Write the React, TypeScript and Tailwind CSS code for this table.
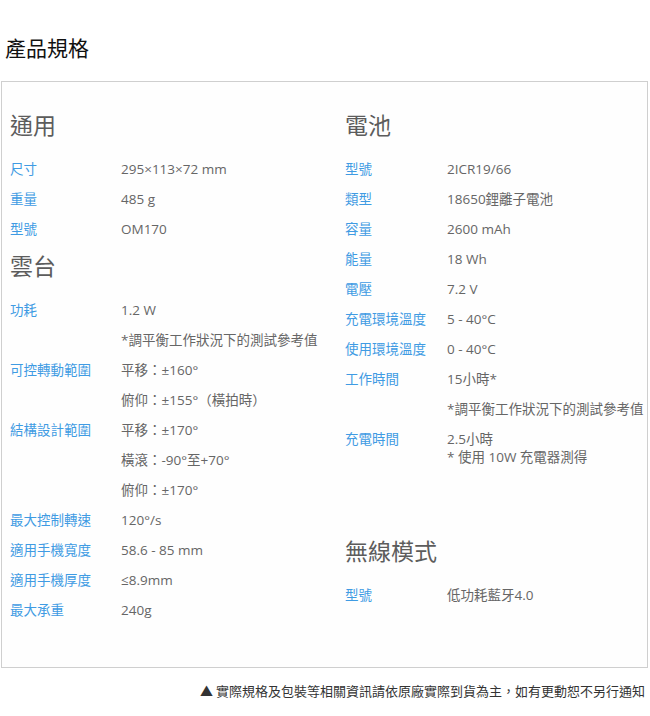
import React from "react";

type Row = { label?: string; value: React.ReactNode };

const font = { fontFamily: "'Open Sans', 'Noto Sans CJK TC', sans-serif" };

function Heading({ children }: { children: React.ReactNode }) {
  return (
    <div className="pt-[4px] pb-[11px] h-[51px] text-[23px] leading-[36px] text-[#5c5c5c]">
      {children}
    </div>
  );
}

function Rows({ rows, labelW }: { rows: Row[]; labelW: string }) {
  return (
    <div className="flex flex-col">
      {rows.map((r, i) => (
        <div key={i} className="flex min-h-[30px] items-start">
          <div className={`${labelW} shrink-0 text-[#3f9be3] leading-[30px]`}>{r.label ?? ""}</div>
          <div className="text-[#666] leading-[30px] whitespace-nowrap">{r.value}</div>
        </div>
      ))}
    </div>
  );
}

export default function App() {
  const general: Row[] = [
    { label: "尺寸", value: "295×113×72 mm" },
    { label: "重量", value: "485 g" },
    { label: "型號", value: "OM170" },
  ];
  const gimbal: Row[] = [
    { label: "功耗", value: "1.2 W" },
    { value: "*調平衡工作狀況下的測試參考值" },
    { label: "可控轉動範圍", value: "平移：±160°" },
    { value: "俯仰：±155°（橫拍時）" },
    { label: "結構設計範圍", value: "平移：±170°" },
    { value: "橫滾：-90°至+70°" },
    { value: "俯仰：±170°" },
    { label: "最大控制轉速", value: "120°/s" },
    { label: "適用手機寬度", value: "58.6 - 85 mm" },
    { label: "適用手機厚度", value: "≤8.9mm" },
    { label: "最大承重", value: "240g" },
  ];
  const battery: Row[] = [
    { label: "型號", value: "2ICR19/66" },
    { label: "類型", value: "18650鋰離子電池" },
    { label: "容量", value: "2600 mAh" },
    { label: "能量", value: "18 Wh" },
    { label: "電壓", value: "7.2 V" },
    { label: "充電環境溫度", value: "5 - 40°C" },
    { label: "使用環境溫度", value: "0 - 40°C" },
    { label: "工作時間", value: "15小時*" },
    { value: "*調平衡工作狀況下的測試參考值" },
  ];
  const wireless: Row[] = [{ label: "型號", value: "低功耗藍牙4.0" }];

  return (
    <div className="w-[650px] h-[716px] bg-white text-[13.5px]" style={font}>
      <div className="pt-[33px] pl-[5px] h-[81px] text-[21px] leading-[30px] text-[#111]">產品規格</div>
      <div className="ml-[1px] mr-[2px] border border-[#cfcfcf] bg-[#fefefe] flex pt-[21px] pb-[42px] pl-[8px]">
        <div className="w-[335px] shrink-0">
          <Heading>通用</Heading>
          <Rows rows={general} labelW="w-[111px]" />
          <Heading>雲台</Heading>
          <Rows rows={gimbal} labelW="w-[111px]" />
        </div>
        <div className="flex-1">
          <Heading>電池</Heading>
          <Rows rows={battery} labelW="w-[102px]" />
          <div className="flex pt-[6px]">
            <div className="w-[102px] shrink-0 text-[#3f9be3] leading-[18px]">充電時間</div>
            <div className="text-[#666] leading-[18px]">
              <div>2.5小時</div>
              <div>* 使用 10W 充電器測得</div>
            </div>
          </div>
          <div className="h-[63px]" />
          <Heading>無線模式</Heading>
          <Rows rows={wireless} labelW="w-[102px]" />
        </div>
      </div>
      <div className="flex justify-end pr-[5px] pt-[15px] text-[13px] leading-[16px] text-[#333]" style={{ fontFamily: "'Noto Sans CJK TC', sans-serif" }}>
        ▲ 實際規格及包裝等相關資訊請依原廠實際到貨為主，如有更動恕不另行通知
      </div>
    </div>
  );
}
